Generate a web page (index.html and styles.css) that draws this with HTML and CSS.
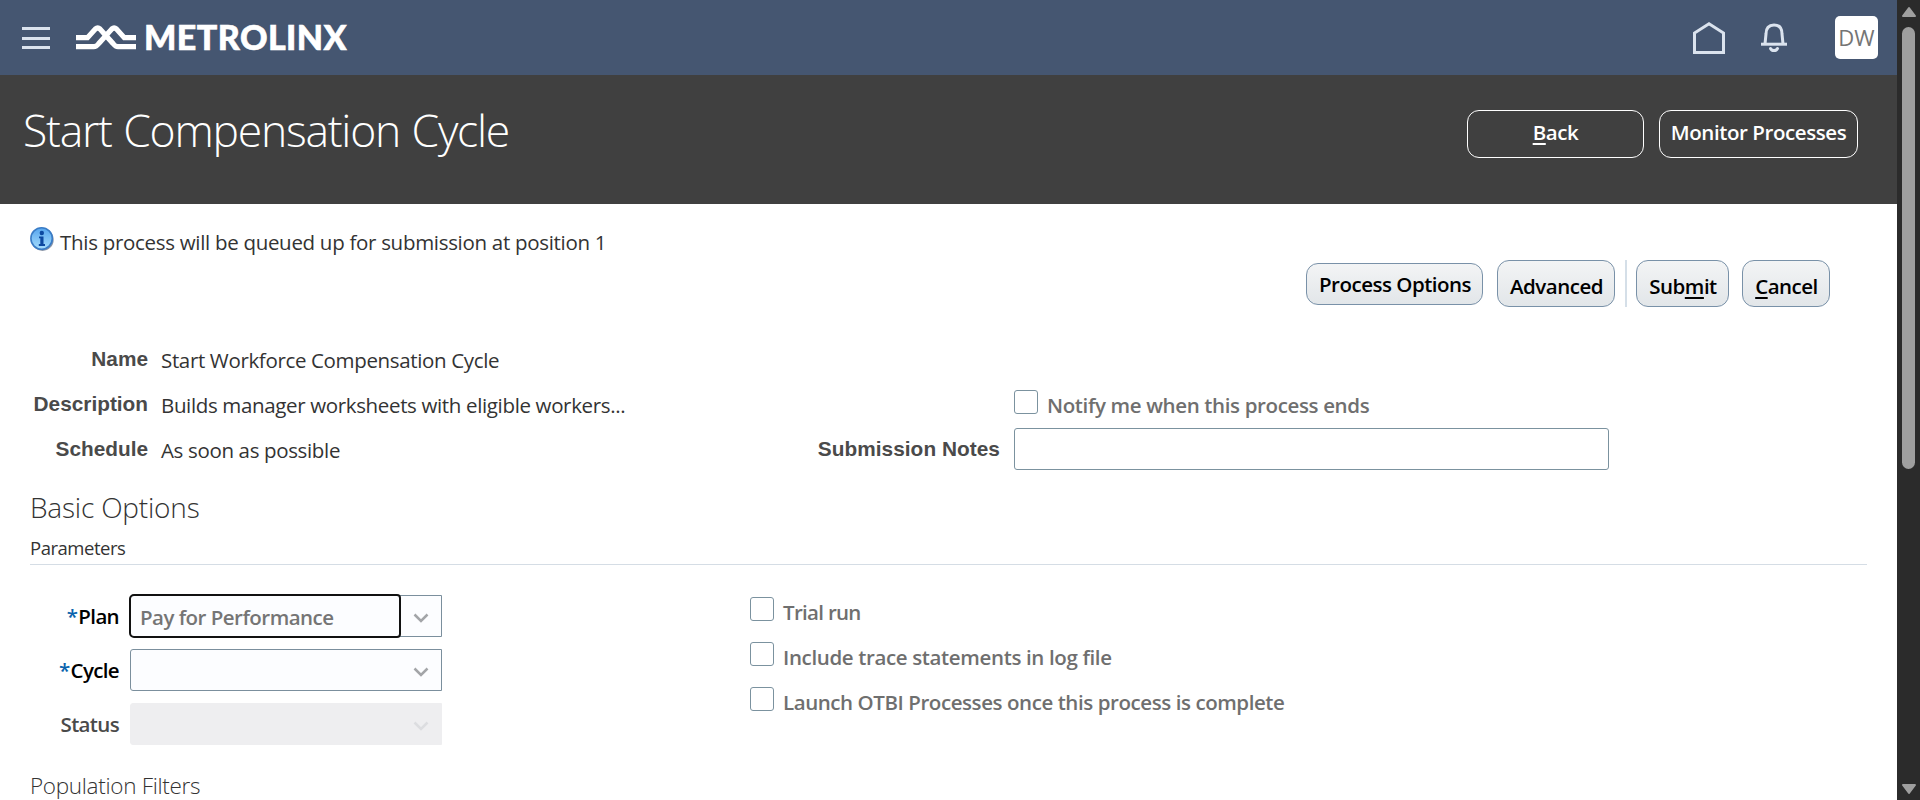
FILE: index.html
```html
<!DOCTYPE html>
<html lang="en">
<head>
<meta charset="utf-8">
<title>Start Compensation Cycle</title>
<link rel="stylesheet" href="styles.css">
</head>
<body>
<div class="app">
  <div class="page">
    <header class="topbar">
      <button class="menu" aria-label="Menu"><span></span><span></span><span></span></button>
      <div class="brand">
        <svg class="brand-mark" width="62" height="28" viewBox="0 0 62 28" fill="none" stroke="#fff" stroke-width="5.2">
          <path d="M1 13.700H12.500L20.300 5Q22.700 2.800 25 5L38 19.500Q40.500 22.700 43 22.700H61"/>
          <path d="M1 22.700H18.800Q21.300 22.700 23.800 19.500L36.800 5Q39.100 2.800 41.500 5L49.300 13.700H61"/>
        </svg>
        <span class="brand-name">METROLINX</span>
      </div>
      <nav class="tools">
        <svg class="home" width="32" height="32" viewBox="0 0 32 32" fill="none" stroke="#dbe3ee" stroke-width="3"><path d="M1.500 30.500V11L16 1.800L30.500 11V30.500Z"/></svg>
        <svg class="bell" width="26" height="30" viewBox="0 0 26 30" fill="none" stroke="#dbe3ee" stroke-width="3"><path d="M0 21.200H26"/><path d="M4 21L5 11C5 5 8 2 13 2S21 5 21 11L22 21"/><path d="M9.500 25.500C11 28.300 15 28.300 16.500 25.500" stroke-linecap="round"/></svg>
        <span class="avatar">DW</span>
      </nav>
    </header>
    <section class="titlebar">
      <h1>Start Compensation Cycle</h1>
      <div class="title-actions">
        <button class="ghost back"><u>B</u>ack</button>
        <button class="ghost monitor">Monitor Processes</button>
      </div>
    </section>
    <main class="content">
      <div class="notice">
        <svg class="info" width="24" height="24" viewBox="0 0 24 24">
          <defs><linearGradient id="blue" x1="0" y1="0" x2="0" y2="1"><stop offset="0" stop-color="#57a6ee"/><stop offset="1" stop-color="#a5dcfc"/></linearGradient></defs>
          <circle cx="12.500" cy="12.700" r="11.200" fill="#8b96a8"/>
          <circle cx="11.600" cy="11.500" r="10.700" fill="url(#blue)" stroke="#3a7cc6" stroke-width="1.600"/>
          <path d="M9 9.500H13.500V17H15V19H8.800V17H10.300V11.300H9Z" fill="#0d49a0"/><circle cx="11.800" cy="6" r="2.200" fill="#0d49a0"/>
        </svg>
        <span class="notice-text">This process will be queued up for submission at position 1</span>
      </div>
      <div class="toolbar">
        <button class="btn options">Process Options</button>
        <button class="btn advanced">Advanced</button>
        <span class="divider"></span>
        <button class="btn submit">Sub<u>m</u>it</button>
        <button class="btn cancel"><u>C</u>ancel</button>
      </div>
      <div class="details">
        <span class="label">Name</span><span class="value">Start Workforce Compensation Cycle</span><span></span><span></span>
        <span class="label">Description</span><span class="value">Builds manager worksheets with eligible workers...</span><span></span>
        <label class="check"><i class="box"></i><span>Notify me when this process ends</span></label>
        <span class="label">Schedule</span><span class="value">As soon as possible</span><span class="label notes">Submission Notes</span><input class="notes-input" type="text" aria-label="Submission Notes">
      </div>
      <h2>Basic Options</h2>
      <h3>Parameters</h3>
      <div class="params">
        <div class="fields">
          <span class="field-label"><b>*</b>Plan</span>
          <div class="select focused"><span class="select-text">Pay for Performance</span><svg class="chev" width="16" height="11" viewBox="0 0 16 11"><path d="M1.500 1.500L8 8L14.500 1.500"/></svg></div>
          <span class="field-label"><b>*</b>Cycle</span>
          <div class="select"><span class="select-text"></span><svg class="chev" width="16" height="11" viewBox="0 0 16 11"><path d="M1.500 1.500L8 8L14.500 1.500"/></svg></div>
          <span class="field-label muted">Status</span>
          <div class="select disabled"><span class="select-text"></span><svg class="chev" width="16" height="11" viewBox="0 0 16 11"><path d="M1.500 1.500L8 8L14.500 1.500"/></svg></div>
        </div>
        <div class="checks">
          <label class="check"><i class="box"></i><span class="trial">Trial run</span></label>
          <label class="check"><i class="box"></i><span>Include trace statements in log file</span></label>
          <label class="check"><i class="box"></i><span class="launch">Launch OTBI Processes once this process is complete</span></label>
        </div>
      </div>
      <h2 class="population">Population Filters</h2>
    </main>
  </div>
  <div class="scrollbar">
    <svg width="16" height="12" viewBox="0 0 16 12"><path d="M8 2L14 10H2Z"/></svg>
    <div class="thumb"></div>
    <svg class="down" width="16" height="12" viewBox="0 0 16 12"><path d="M8 10L14 2H2Z"/></svg>
  </div>
</div>
</body>
</html>
```
FILE: styles.css
```css
*, *::before { box-sizing: border-box; }
body { margin: 0; background: #fff; font-family: "Open Sans", "Noto Sans", sans-serif; font-size: 20.5px; color: #333; }
button, input { font: inherit; margin: 0; padding: 0; }
u { text-underline-offset: 3px; text-decoration-thickness: 2px; text-decoration-skip-ink: none; }
.app { display: flex; width: 1920px; height: 800px; overflow: hidden; }
.page { width: 1897px; }

.topbar { height: 75px; background: #455671; display: flex; align-items: flex-start; padding-left: 22px; }
.menu { width: 28px; height: 22px; margin-top: 27px; background: none; border: 0; display: flex; flex-direction: column; justify-content: space-between; }
.menu span { height: 3px; width: 28px; background: #dbe3ee; }
.brand { display: flex; margin-left: 25px; padding-top: 24px; }
.brand-mark { display: block; }
.brand-name { margin: -1px 0 0 7px; font-family: Lato, sans-serif; font-weight: 900; font-size: 34px; line-height: 28px; letter-spacing: .45px; color: #fff; -webkit-text-stroke: .6px #fff; }
.tools { margin-left: auto; display: flex; padding-right: 19px; }
.home { margin-top: 22px; }
.bell { margin: 23px 0 0 36px; }
.avatar { margin: 16px 0 0 48px; width: 43px; height: 43px; border-radius: 5px; background: #fff; color: #757575; font-size: 22px; line-height: 42px; text-align: center; }

.titlebar { height: 129px; background: #404040; display: flex; justify-content: space-between; padding: 0 39px 0 23px; }
h1 { margin: 0; padding-top: 27px; font-weight: 300; font-size: 44.5px; line-height: 56px; color: #fff; letter-spacing: -1.25px; word-spacing: 1.2px; white-space: nowrap; }
.title-actions { display: flex; gap: 15px; padding-top: 35px; }
.ghost { height: 48px; border: 1px solid #fff; border-radius: 12px; background: none; color: #fff; font-weight: 600; padding-bottom: 5px; white-space: nowrap; letter-spacing: -.42px; }
.back { width: 177px; }
.monitor { width: 199px; }

.content { padding: 24px 30px 0; }
.notice { display: flex; height: 28px; }
.info { margin-top: -1px; }
.notice-text { margin-left: 6px; line-height: 28px; letter-spacing: -.3px; white-space: nowrap; }
.toolbar { display: flex; justify-content: flex-end; margin-top: 4px; height: 47px; padding-right: 37px; }
.btn { height: 47px; border: 1px solid #7991a8; border-radius: 12px; background: linear-gradient(#f3f4f5, #e2e6e9); color: #000; font-weight: 600; padding-top: 5px; padding-left: 1px; letter-spacing: -.5px; white-space: nowrap; }
.options { height: 42px; width: 177px; margin: 3px 14px 0 0; padding-top: 0; padding-bottom: 1px; }
.advanced { width: 118px; }
.divider { width: 2px; background: #d5dfe8; margin: 0 9px 0 10px; }
.submit { width: 93px; }
.cancel { width: 88px; margin-left: 13px; }

.details { display: grid; grid-template-columns: 118px 673px 180px 1fr; grid-auto-rows: 45px; margin-top: 31px; line-height: 45px; }
.label { font-family: "Liberation Sans", Arial, sans-serif; font-weight: 700; font-size: 20.8px; line-height: 42px; color: #4a4a4a; text-align: right; white-space: nowrap; }
.notes { letter-spacing: .05px; padding-right: 1px; }
.value { padding-left: 13px; letter-spacing: -.35px; white-space: nowrap; }
.notes-input { margin-left: 13px; width: 595px; height: 42px; border: 1px solid #7b929f; border-radius: 3px; background: #fff; }
.details .check { margin-left: 13px; }
.details .notes { width: 180px; direction: rtl; }
.check { display: flex; height: 45px; line-height: 45px; color: #6f6f6f; font-weight: 600; letter-spacing: -.36px; white-space: nowrap; }
.box { width: 24px; height: 24px; margin: 7px 9px 0 0; border: 1px solid #7b929f; border-radius: 3px; background: #fff; }
.trial { letter-spacing: -.7px; }
.launch { letter-spacing: -.43px; }

h2 { margin: 16px 0 0; font-weight: 300; font-size: 28px; line-height: 36px; color: #333; letter-spacing: -.2px; }
h3 { margin: 10px 0 0; padding-bottom: 3px; border-bottom: 1px solid #d5dde5; font-weight: 400; font-size: 18.5px; line-height: 26px; color: #333; letter-spacing: -.48px; }
.params { display: flex; margin-top: 30px; }
.fields { display: grid; grid-template-columns: 89px 312px; grid-auto-rows: 42px; row-gap: 12px; column-gap: 11px; }
.field-label { text-align: right; font-weight: 600; color: #000; line-height: 43px; letter-spacing: -.65px; }
.field-label b { color: #0a63ad; font-weight: 600; margin-right: 1px; }
.muted { color: #4a4a4a; }
.select { position: relative; display: flex; justify-content: space-between; height: 42px; border: 1px solid #7b8f9d; border-radius: 3px 0 0 3px; background: #fcfdff; }
.select-text { padding-left: 9px; line-height: 42px; font-weight: 600; color: #757575; letter-spacing: -.52px; }
.focused::before { content: ""; position: absolute; left: -2px; top: -2px; width: 272px; height: 44px; border: 2px solid #111; border-radius: 5px 4px 4px 5px; }
.chev { margin: 17px 12px 0 0; fill: none; stroke: #a3a5a8; stroke-width: 2.5; }
.disabled { background: #eeeef0; border-color: #eeeef0; }
.disabled .chev { stroke: #dcdde0; }
.checks { margin: -5px 0 0 308px; }
.population { margin-top: 26px; font-size: 22.5px; line-height: 30px; letter-spacing: -.3px; }

.scrollbar { width: 23px; background: #2b2b2b; display: flex; flex-direction: column; align-items: center; padding-top: 6px; }
.scrollbar svg { fill: #9f9f9f; stroke: #9f9f9f; stroke-width: 2; stroke-linejoin: round; }
.thumb { width: 13px; height: 442px; margin-top: 9px; border-radius: 7px; background: #9f9f9f; }
.scrollbar .down { margin: auto 0 5px; }
```
